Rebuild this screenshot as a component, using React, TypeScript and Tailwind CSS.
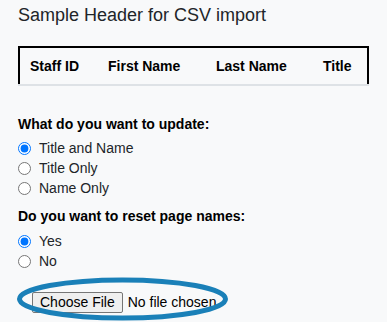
import React from "react";

type RadioProps = {
  name: string;
  label: string;
  checked?: boolean;
};

const Radio = ({ name, label, checked }: RadioProps) => (
  <label className="flex h-[20px] items-center">
    <input
      type="radio"
      name={name}
      defaultChecked={checked}
      className="m-0 ml-0 h-[13px] w-[13px] accent-[#0075ff]"
    />
    <span className="ml-[8px] text-[14px]">{label}</span>
  </label>
);

export default function App() {
  return (
    <div className="relative h-[322px] overflow-hidden bg-[#f8f9fa] pl-[18px] font-['Liberation_Sans',Arial,sans-serif] text-[#212529]">
      <h2 className="pt-[4px] text-[18px] leading-[22px]">Sample Header for CSV import</h2>

      <div className="mt-[20px] w-[351px]">
        <div className="flex h-[38px] items-center border-2 border-b-0 border-black pl-[10px] text-[14px] font-bold text-black">
          <div className="w-[78px]">Staff ID</div>
          <div className="w-[108px]">First Name</div>
          <div className="w-[107px]">Last Name</div>
          <div>Title</div>
        </div>
        <div className="h-[2px] bg-[#dee2e6]" />
      </div>

      <div className="mt-[28px] text-[14px] font-bold leading-[20px] text-black">What do you want to update:</div>
      <div className="mt-[4px] flex flex-col">
        <Radio name="update" label="Title and Name" checked />
        <Radio name="update" label="Title Only" />
        <Radio name="update" label="Name Only" />
      </div>

      <div className="mt-[8px] text-[14px] font-bold leading-[20px] text-black">Do you want to reset page names:</div>
      <div className="mt-[5px] flex flex-col">
        <Radio name="reset" label="Yes" checked />
        <Radio name="reset" label="No" />
      </div>

      <div className="relative mt-[21px] flex items-center pl-[14px]">
        <button className="h-[21px] rounded-[2px] border border-[#767676] bg-[#efefef] px-[7px] text-[14px] leading-[19px] text-black">
          Choose File
        </button>
        <span className="ml-[5px] text-[14px] text-black">No file chosen</span>
        <svg className="pointer-events-none absolute left-[-4px] top-[-15px]" width="220" height="46" viewBox="0 0 220 46">
          <ellipse cx="108.5" cy="22" rx="103" ry="19" fill="none" stroke="#1a80b8" strokeWidth="5" />
        </svg>
      </div>
    </div>
  );
}
